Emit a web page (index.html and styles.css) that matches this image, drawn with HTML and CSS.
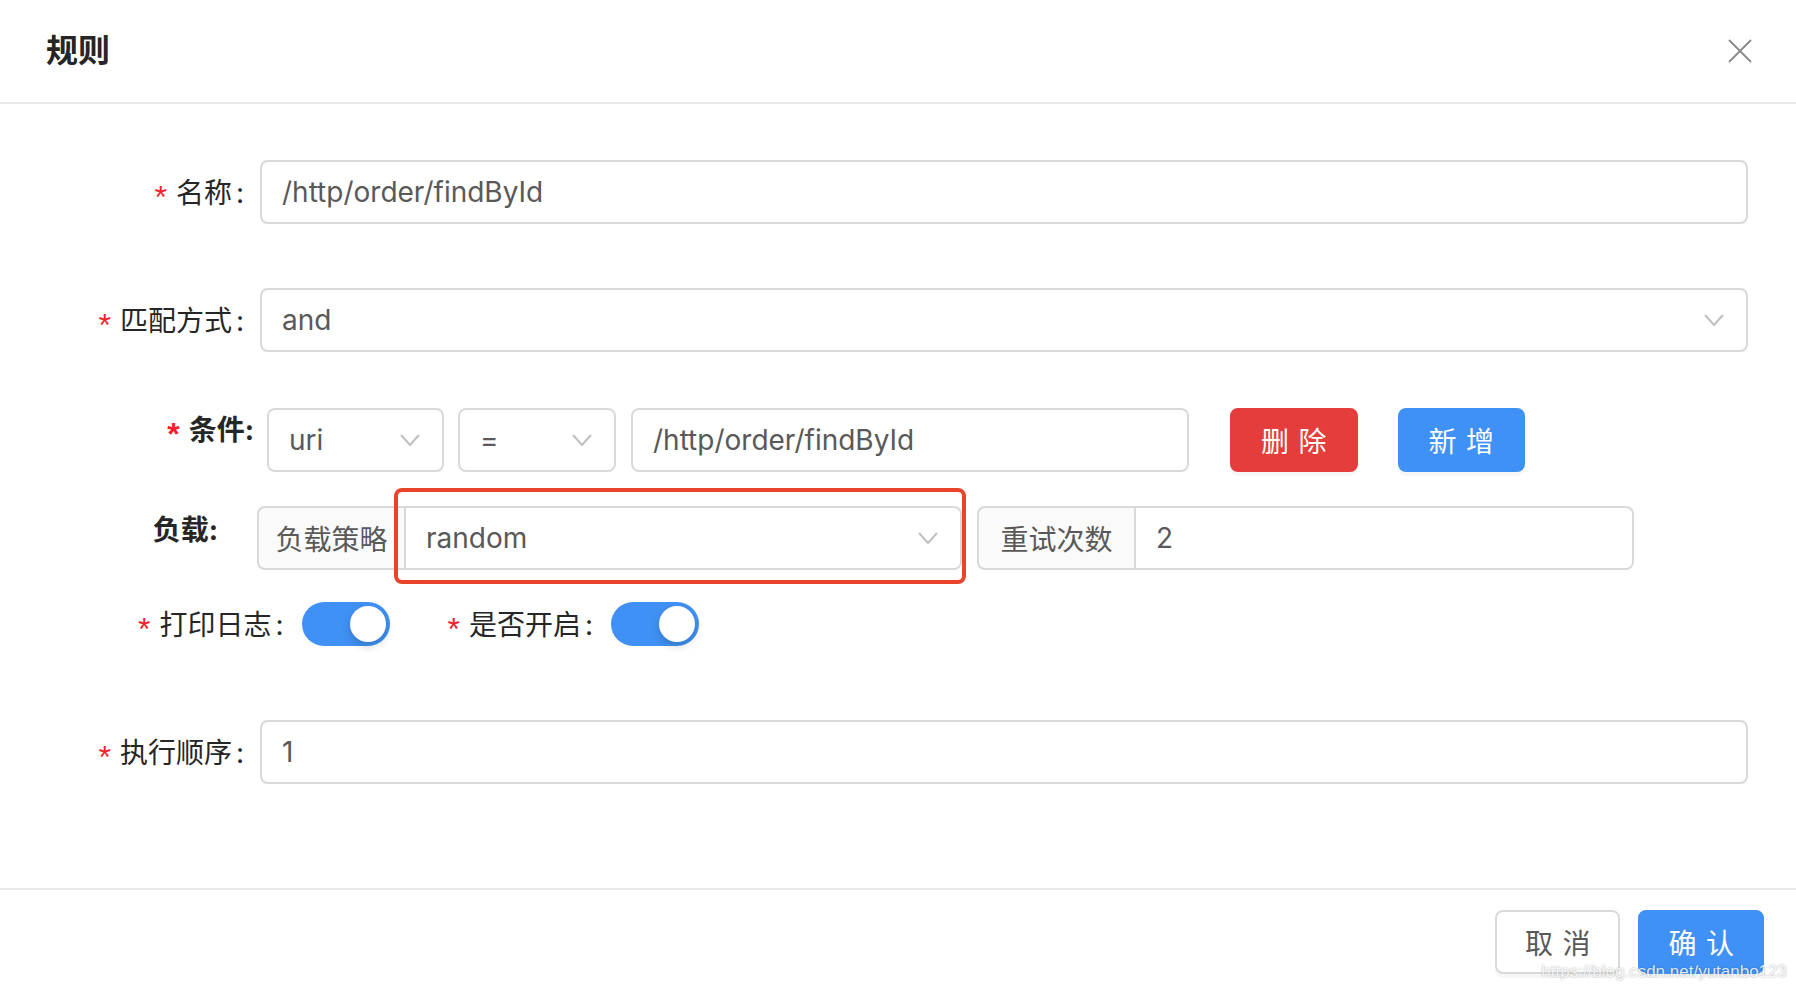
FILE: index.html
```html
<!DOCTYPE html>
<html lang="zh-CN">
<head>
    <meta charset="UTF-8">
    <meta name="viewport" content="width=device-width, initial-scale=1.0">
    <title>规则</title>
    <link rel="stylesheet" href="styles.css">
</head>
<body>
    <div class="modal">
        <div class="modal-header">
            <div class="modal-title">规则</div>
            <button class="modal-close" aria-label="关闭">
                <svg width="24" height="24" viewBox="0 0 24 24"><path d="M1 1 L23 23 M23 1 L1 23" stroke="#8c8c8c" stroke-width="2" fill="none"/></svg>
            </button>
        </div>

        <div class="modal-body">
            <div class="form-item">
                <div class="form-label required">名称</div>
                <div class="form-control">
                    <div class="input">/http/order/findById</div>
                </div>
            </div>

            <div class="form-item">
                <div class="form-label required">匹配方式</div>
                <div class="form-control">
                    <div class="select">
                        <span>and</span>
                        <svg class="arrow" width="20" height="12" viewBox="0 0 20 12"><path d="M1 1 L10 11 L19 1" stroke="#bfbfbf" stroke-width="2" fill="none"/></svg>
                    </div>
                </div>
            </div>

            <div class="cond-row">
                <div class="row-label required">条件:</div>
                <div class="select select-key">
                    <span>uri</span>
                    <svg class="arrow" width="20" height="12" viewBox="0 0 20 12"><path d="M1 1 L10 11 L19 1" stroke="#bfbfbf" stroke-width="2" fill="none"/></svg>
                </div>
                <div class="select select-op">
                    <span>=</span>
                    <svg class="arrow" width="20" height="12" viewBox="0 0 20 12"><path d="M1 1 L10 11 L19 1" stroke="#bfbfbf" stroke-width="2" fill="none"/></svg>
                </div>
                <div class="input input-value">/http/order/findById</div>
                <button class="btn btn-danger"><span>删除</span></button>
                <button class="btn btn-primary btn-add"><span>新增</span></button>
            </div>

            <div class="load-row">
                <div class="row-label load-label">负载:</div>
                <div class="input-group strategy">
                    <div class="addon addon-strategy">负载策略</div>
                    <div class="highlight">
                        <div class="select">
                            <span>random</span>
                            <svg class="arrow" width="20" height="12" viewBox="0 0 20 12"><path d="M1 1 L10 11 L19 1" stroke="#bfbfbf" stroke-width="2" fill="none"/></svg>
                        </div>
                    </div>
                </div>
                <div class="input-group retry">
                    <div class="addon addon-retry">重试次数</div>
                    <div class="input">2</div>
                </div>
            </div>

            <div class="switch-row">
                <div class="switch-item">
                    <div class="switch-label required">打印日志</div>
                    <div class="switch checked"><span class="knob"></span></div>
                </div>
                <div class="switch-item">
                    <div class="switch-label required">是否开启</div>
                    <div class="switch checked"><span class="knob"></span></div>
                </div>
            </div>

            <div class="form-item">
                <div class="form-label required">执行顺序</div>
                <div class="form-control">
                    <div class="input">1</div>
                </div>
            </div>
        </div>

        <div class="modal-footer">
            <button class="btn btn-default"><span>取消</span></button>
            <button class="btn btn-primary"><span>确认</span></button>
        </div>

        <div class="watermark">https://blog.csdn.net/yutanbo123</div>
    </div>
</body>
</html>
```

FILE: styles.css
```css
body {
    margin: 0;
    font-family: "Inter", "Noto Sans CJK SC", sans-serif;
    font-size: 28px;
    color: #262626;
    background-color: #fff;
    overflow: hidden;
}

.modal {
    position: relative;
    height: 990px;
}

.modal-header {
    display: flex;
    align-items: center;
    justify-content: space-between;
    box-sizing: border-box;
    height: 104px;
    padding: 0 44px 6px 46px;
    border-bottom: 2px solid #e8e8e8;
}

.modal-title {
    font-size: 32px;
    font-weight: bold;
    color: #262626;
}

.modal-close {
    display: flex;
    padding: 0;
    margin-top: 6px;
    border: none;
    background: none;
    cursor: pointer;
}

.modal-body {
    padding: 48px;
}

/* form items */
.form-item {
    display: flex;
    align-items: center;
    height: 80px;
    margin-bottom: 48px;
}

.form-label {
    width: 212px;
    flex-shrink: 0;
    text-align: right;
    color: #262626;
}

.form-label::after,
.switch-label::after {
    content: ":";
    margin: 0 16px 0 4px;
}

.required::before {
    content: "*";
    display: inline-block;
    margin-right: 9px;
    color: #f5222d;
    font-family: "Liberation Sans", sans-serif;
    font-size: 32px;
    line-height: 1;
    vertical-align: -5px;
}

.form-control {
    flex: 1;
}

.input,
.select {
    box-sizing: border-box;
    display: flex;
    align-items: center;
    height: 64px;
    padding: 0 20px;
    border: 2px solid #d9d9d9;
    border-radius: 8px;
    background: #fff;
    color: #595959;
    white-space: nowrap;
}

.select {
    justify-content: space-between;
    padding-right: 22px;
}

/* condition row */
.cond-row {
    display: flex;
    align-items: flex-start;
    height: 64px;
    margin-bottom: 34px;
}

.cond-row > * {
    flex-shrink: 0;
}

.row-label {
    box-sizing: border-box;
    flex-shrink: 0;
    width: 219px;
    padding-right: 13px;
    line-height: 44px;
    text-align: right;
    font-weight: bold;
    color: #262626;
}

.select-key {
    width: 177px;
    margin-right: 14px;
}

.select-op {
    width: 158px;
    margin-right: 15px;
}

.input-value {
    width: 558px;
    margin-right: 41px;
}

.btn {
    box-sizing: border-box;
    height: 64px;
    padding: 0 29px;
    border: 2px solid #d9d9d9;
    border-radius: 8px;
    background: #fff;
    color: #595959;
    font-family: inherit;
    font-size: 28px;
    white-space: nowrap;
    box-shadow: 0 4px 0 rgba(0, 0, 0, 0.03);
    cursor: pointer;
}

.btn span {
    letter-spacing: 0.34em;
    margin-right: -0.34em;
}

.btn-danger {
    background: #e43d3b;
    border-color: #e43d3b;
    color: #fff;
}

.btn-primary {
    background: #4091f5;
    border-color: #4091f5;
    color: #fff;
}

.btn-add {
    margin-left: 40px;
}

/* load row */
.load-row {
    display: flex;
    align-items: flex-start;
    height: 64px;
    margin-bottom: 32px;
}

.load-label {
    width: 209px;
    padding-right: 39px;
    line-height: 48px;
}

.input-group {
    display: flex;
    flex-shrink: 0;
}

.strategy {
    width: 705px;
}

.retry {
    width: 657px;
    margin-left: 15px;
}

.addon {
    box-sizing: border-box;
    display: flex;
    align-items: center;
    justify-content: center;
    flex-shrink: 0;
    height: 64px;
    border: 2px solid #d9d9d9;
    border-right: none;
    border-radius: 8px 0 0 8px;
    background: #fafafa;
    color: #595959;
}

.addon-strategy {
    width: 147px;
}

.addon-retry {
    width: 157px;
}

.input-group .input,
.input-group .highlight {
    flex: 1;
}

.input-group .input,
.input-group .select {
    border-radius: 0 8px 8px 0;
}

.highlight {
    position: relative;
}

.highlight::after {
    content: "";
    position: absolute;
    left: -10px;
    right: -4px;
    top: -18px;
    bottom: -14px;
    border: 4px solid #e8432b;
    border-radius: 8px;
    pointer-events: none;
}

/* switches */
.switch-row {
    display: flex;
    align-items: center;
    height: 44px;
    padding-left: 90px;
    margin-bottom: 66px;
}

.switch-item {
    display: flex;
    align-items: center;
}

.switch-item + .switch-item {
    margin-left: 58px;
}

.switch-label {
    color: #262626;
}

.switch-label::after {
    margin-right: 18px;
}

.switch {
    position: relative;
    width: 88px;
    height: 44px;
    border-radius: 22px;
    background: #bfbfbf;
}

.switch.checked {
    background: #4091f5;
}

.knob {
    position: absolute;
    top: 4px;
    left: 4px;
    width: 36px;
    height: 36px;
    border-radius: 50%;
    background: #fff;
    box-shadow: 0 4px 8px rgba(0, 35, 11, 0.2);
}

.switch.checked .knob {
    left: auto;
    right: 4px;
}

/* footer */
.modal-footer {
    display: flex;
    justify-content: flex-end;
    gap: 18px;
    padding: 20px 32px;
    border-top: 2px solid #e8e8e8;
}

.modal-footer .btn {
    padding: 0 28px;
}

.watermark {
    position: absolute;
    right: 9px;
    bottom: 8px;
    font-family: "Liberation Sans", sans-serif;
    font-size: 17px;
    color: rgba(255, 255, 255, 0.85);
    text-shadow: 0 0 2px rgba(0, 0, 0, 0.35);
}
```
